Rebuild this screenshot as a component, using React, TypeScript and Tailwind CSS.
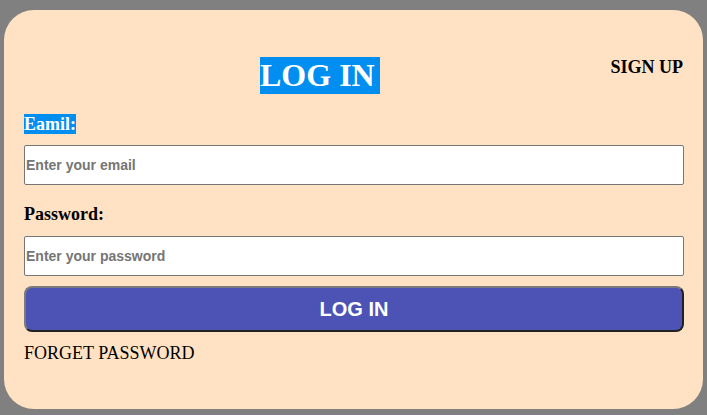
export default function App() {
  const serif = { fontFamily: '"Liberation Serif", "Times New Roman", serif' };
  return (
    <div className="w-[707px] h-[415px] bg-[#808080] pt-[10px] px-[4px] overflow-hidden">
      <div
        className="w-[699px] h-[399px] bg-[#ffe2c4] rounded-[30px] pt-[47px] px-[20px] flex flex-col"
        style={serif}
      >
        <div className="flex items-start">
          <h1 className="ml-[236px] bg-[#008ef0] text-white text-[32px] leading-[37px] font-bold pr-[5px]">
            LOG IN
          </h1>
          <div className="ml-auto text-[18px] leading-[21px] font-bold text-black">SIGN UP</div>
        </div>
        <div className="mt-[20px] leading-[21px] h-[21px]">
          <span className="bg-[#008ef0] text-white text-[18px] leading-[21px] font-bold">Eamil:</span>
        </div>
        <input
          type="email"
          placeholder="Enter your email"
          className="mt-[10px] w-[660px] h-[40px] bg-white border border-[#767676] rounded-[2px] px-[1px] text-[14px] font-bold placeholder:text-[#757575] [font-family:'Liberation_Sans',Arial,sans-serif] outline-none"
        />
        <div className="mt-[19px] text-[18px] leading-[21px] font-bold text-black">Password:</div>
        <input
          type="password"
          placeholder="Enter your password"
          className="mt-[11px] w-[660px] h-[40px] bg-white border border-[#767676] rounded-[2px] px-[1px] text-[14px] font-bold placeholder:text-[#757575] [font-family:'Liberation_Sans',Arial,sans-serif] outline-none"
        />
        <button
          className="mt-[10px] w-[660px] h-[46px] bg-[#4c53b5] text-white text-[20px] font-bold rounded-[8px] border-2 border-t-[#7a7a7a] border-l-[#7a7a7a] border-r-[#222] border-b-[#222] [font-family:'Liberation_Sans',Arial,sans-serif]"
        >
          LOG IN
        </button>
        <div className="mt-[11px] text-[18px] leading-[21px] text-black">FORGET PASSWORD</div>
      </div>
    </div>
  );
}
